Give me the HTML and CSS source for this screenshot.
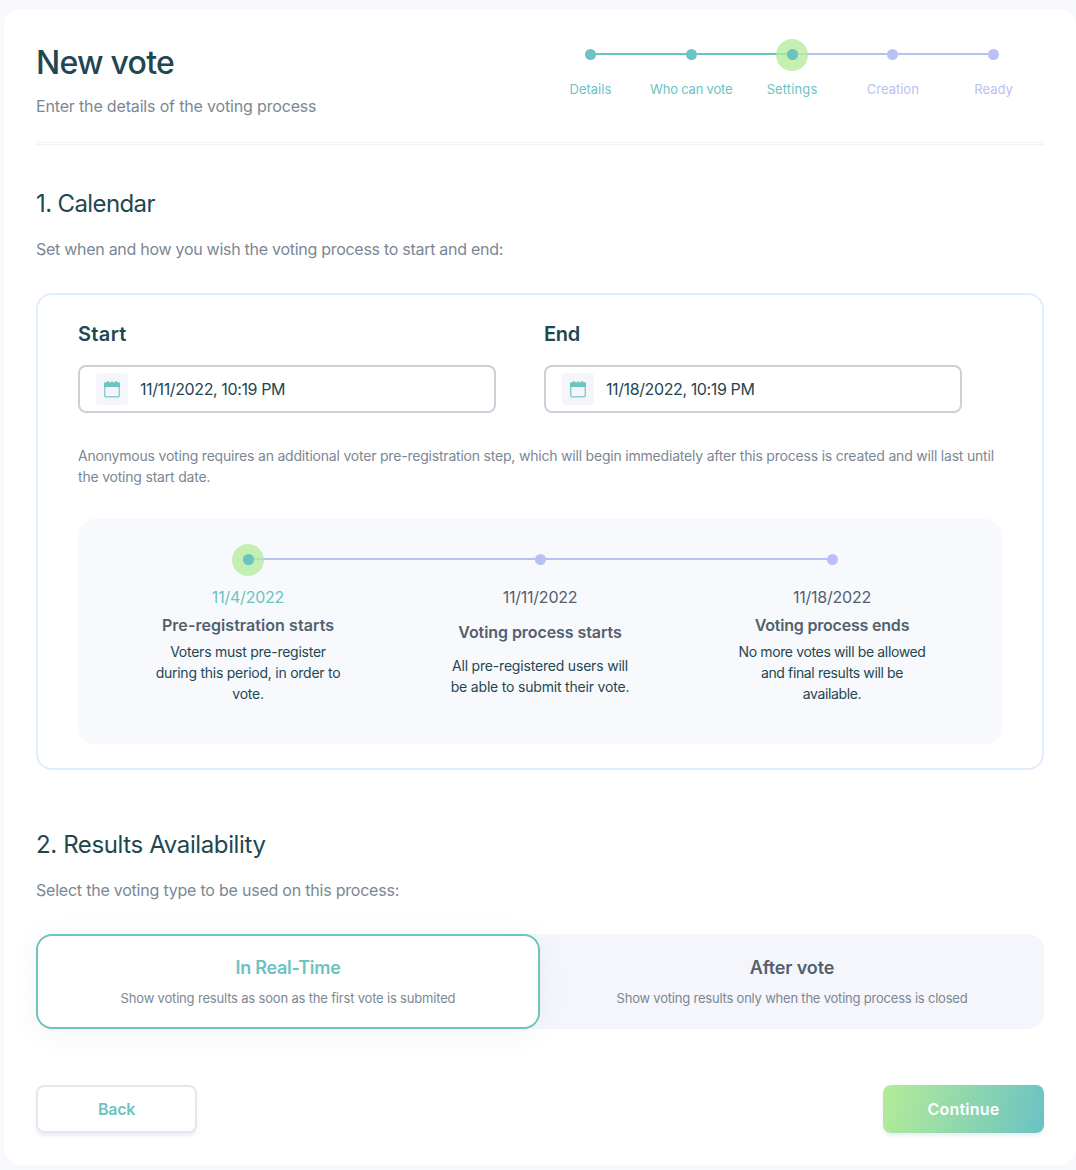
FILE: index.html
```
<!DOCTYPE html>
<html lang="en">
<head>
<meta charset="utf-8">
<title>New vote</title>
<link rel="stylesheet" href="styles.css">
</head>
<body>
<main class="panel">
  <header class="header">
    <div class="header-text">
      <h1 class="title">New vote</h1>
      <p class="subtitle">Enter the details of the voting process</p>
    </div>
    <ol class="steps">
      <li class="step done first"><div class="rail"><i class="line"></i><i class="dot"></i><i class="line"></i></div><span class="step-label">Details</span></li>
      <li class="step done"><div class="rail"><i class="line"></i><i class="dot"></i><i class="line"></i></div><span class="step-label tight">Who can vote</span></li>
      <li class="step current"><div class="rail"><i class="line"></i><i class="dot"></i><i class="line"></i></div><span class="step-label wide">Settings</span></li>
      <li class="step"><div class="rail"><i class="line"></i><i class="dot"></i><i class="line"></i></div><span class="step-label">Creation</span></li>
      <li class="step last"><div class="rail"><i class="line"></i><i class="dot"></i><i class="line"></i></div><span class="step-label">Ready</span></li>
    </ol>
  </header>
  <div class="divider"></div>

  <section class="section">
    <h2 class="heading heading-calendar">1. Calendar</h2>
    <p class="intro">Set when and how you wish the voting process to start and end:</p>
    <div class="card">
      <div class="dates">
        <div class="field">
          <label class="field-label">Start</label>
          <div class="input">
            <span class="input-icon"><svg width="16" height="17" viewBox="0 0 16 17" fill="#6bc3c2"><path d="M3 0h1.500v1.300h2.700V.6h1.600v.7h2.700V0H13v1.300h1.600Q16 1.300 16 2.700V6H0V2.700Q0 1.300 1.400 1.300H3z"/><path opacity=".75" d="M0 6h1.500v8.900h13V6H16v9q0 1.400-1.400 1.400H1.400Q0 16.400 0 15z"/></svg></span>
            <span class="input-value">11/11/2022, 10:19 PM</span>
          </div>
        </div>
        <div class="field">
          <label class="field-label label-end">End</label>
          <div class="input">
            <span class="input-icon"><svg width="16" height="17" viewBox="0 0 16 17" fill="#6bc3c2"><path d="M3 0h1.500v1.300h2.700V.6h1.600v.7h2.700V0H13v1.300h1.600Q16 1.300 16 2.700V6H0V2.700Q0 1.300 1.400 1.300H3z"/><path opacity=".75" d="M0 6h1.500v8.900h13V6H16v9q0 1.400-1.400 1.400H1.400Q0 16.400 0 15z"/></svg></span>
            <span class="input-value">11/18/2022, 10:19 PM</span>
          </div>
        </div>
      </div>
      <p class="note">Anonymous voting requires an additional voter pre-registration step, which will begin immediately after this process is created and will last until the voting start date.</p>
      <div class="timeline">
        <div class="step current first">
          <div class="rail"><i class="line"></i><i class="dot"></i><i class="line"></i></div>
          <div class="event">
            <span class="event-date">11/4/2022</span>
            <strong class="event-title wide">Pre-registration starts</strong>
            <p class="event-text">Voters must pre-register during this period, in order to vote.</p>
          </div>
        </div>
        <div class="step">
          <div class="rail"><i class="line"></i><i class="dot"></i><i class="line"></i></div>
          <div class="event">
            <span class="event-date">11/11/2022</span>
            <strong class="event-title">Voting process starts</strong>
            <p class="event-text relaxed">All pre-registered users will be able to submit their vote.</p>
          </div>
        </div>
        <div class="step last">
          <div class="rail"><i class="line"></i><i class="dot"></i><i class="line"></i></div>
          <div class="event">
            <span class="event-date">11/18/2022</span>
            <strong class="event-title tight">Voting process ends</strong>
            <p class="event-text tight">No more votes will be allowed and final results will be available.</p>
          </div>
        </div>
      </div>
    </div>
  </section>

  <section class="section results">
    <h2 class="heading">2. Results Availability</h2>
    <p class="intro relaxed">Select the voting type to be used on this process:</p>
    <div class="options">
      <div class="option selected">
        <strong class="option-title tight">In Real-Time</strong>
        <span class="option-text">Show voting results as soon as the first vote is submited</span>
      </div>
      <div class="option">
        <strong class="option-title">After vote</strong>
        <span class="option-text tight">Show voting results only when the voting process is closed</span>
      </div>
    </div>
  </section>

  <footer class="actions">
    <button class="button back">Back</button>
    <button class="button continue">Continue</button>
  </footer>
</main>
</body>
</html>
```
FILE: styles.css
```
* { box-sizing: border-box; }

body {
  margin: 0;
  padding: 9px 0 5px 4px;
  background: #f8f9fd;
  font-family: Inter, "Open Sans", sans-serif;
  color: #1f4751;
}

h1, h2, p, ol { margin: 0; padding: 0; }

.panel {
  height: 1156px;
  padding: 29px 32px 32px;
  background: #fff;
  border-radius: 16px;
}

/* Header and progress steps */
.header { display: flex; height: 104px; }
.header-text { width: 50%; padding-top: 5px; }
.title { font-size: 32px; font-weight: 500; line-height: 40px; letter-spacing: -0.75px; }
.subtitle { margin-top: 11px; font-size: 16px; line-height: 24px; letter-spacing: -0.165px; color: #7b8794; }

.steps { display: flex; width: 50%; padding-top: 11px; list-style: none; }
.step { flex: 1; display: flex; flex-direction: column; align-items: center; }
.rail { display: flex; align-self: stretch; height: 11px; }
.line { flex: 1; height: 2px; margin-top: 4px; background: #b9c1f2; }
.dot { position: relative; width: 11px; height: 11px; border-radius: 50%; background: #b9c1f2; }
.done .line, .done .dot, .current .dot, .current .line:first-child { background: #6bc3c2; }
.current .dot { isolation: isolate; }
.current .dot::before {
  content: "";
  position: absolute;
  inset: -10.500px;
  z-index: -1;
  border-radius: 50%;
  background: rgba(178, 235, 152, 0.75);
}
.current .dot::after {
  content: "";
  position: absolute;
  inset: 0;
  border-radius: 50%;
  background: #6bc3c2;
}
.first .line:first-child, .last .line:last-child { visibility: hidden; }
.step-label { margin-top: 19px; font-size: 13px; line-height: 20px; color: #b9c1f2; white-space: nowrap; }
.step-label.tight { letter-spacing: -0.2px; }
.step-label.wide { letter-spacing: 0.12px; }
.done .step-label, .current .step-label { color: #6bc3c2; }

.divider { height: 3px; border: 1px solid #eff3fc; }

/* Sections */
.section { padding-top: 43px; }
.heading { font-size: 24px; font-weight: 400; line-height: 32px; letter-spacing: -0.38px; }
.heading-calendar { letter-spacing: -0.62px; }
.intro { margin-top: 17px; font-size: 16px; line-height: 24px; letter-spacing: -0.28px; color: #7b8794; }
.intro.relaxed { letter-spacing: -0.22px; }

.card { height: 477px; margin-top: 32px; padding: 24px 40px; border: 2px solid #e0edfd; border-radius: 16px; }
.dates { display: grid; grid-template-columns: 418px 418px; gap: 48px; }
.field { display: flex; flex-direction: column; gap: 16px; }
.field-label { font-size: 20px; font-weight: 600; line-height: 30px; letter-spacing: 0.35px; }
.label-end { letter-spacing: -0.3px; }
.input { display: flex; align-items: center; gap: 12px; height: 48px; padding: 0 16px; border: 2px solid #cbd0d9; border-radius: 8px; }
.input-icon { display: flex; align-items: center; justify-content: center; width: 32px; height: 32px; border-radius: 4px; background: #f5f6fb; }
.input-value { font-size: 16px; letter-spacing: -0.39px; }
.note { margin: 32px 0; font-size: 14px; line-height: 21px; letter-spacing: -0.203px; color: #7b8794; }

.timeline { display: flex; height: 225px; padding: 35px 24px 0; border-radius: 16px; background: #f8f9fd; }
.event { display: grid; height: 119px; margin-top: 20px; row-gap: 4px; justify-items: center; align-items: start; text-align: center; }
.event-date { font-size: 16px; line-height: 24px; letter-spacing: -0.22px; color: #52606d; }
.current .event-date { color: #6bc3c2; }
.event-title { font-size: 16px; font-weight: 600; line-height: 24px; color: #52606d; letter-spacing: -0.07px; }
.event-title.wide { letter-spacing: 0.06px; }
.event-title.tight { letter-spacing: -0.2px; }
.event-text { max-width: 194px; margin-top: -0.5px; font-size: 14px; line-height: 21px; letter-spacing: -0.25px; }
.event-text.relaxed { letter-spacing: -0.19px; }
.event-text.tight { letter-spacing: -0.36px; }

.results { padding-top: 59px; }
.options { display: grid; grid-template-columns: 1fr 1fr; height: 95px; margin-top: 32px; border-radius: 16px; background: #f5f6fb; }
.option { display: flex; flex-direction: column; align-items: center; gap: 7px; padding-top: 18px; border: 2px solid transparent; border-radius: 16px; }
.option.selected { background: #fff; border-color: #6bc3c2; box-shadow: 0 4px 30px rgba(0, 0, 0, 0.05); }
.option-title { font-size: 18px; font-weight: 600; line-height: 27px; letter-spacing: -0.15px; color: #52606d; }
.option-title.tight { letter-spacing: -0.27px; }
.selected .option-title { color: #6bc3c2; }
.option-text { font-size: 13px; line-height: 20px; letter-spacing: -0.18px; color: #7b8794; }
.option-text.tight { letter-spacing: -0.21px; }

.actions { display: flex; justify-content: space-between; margin-top: 56px; }
.button { width: 161px; height: 48px; padding: 0; border: 0; border-radius: 8px; font: 600 16px/24px Inter, sans-serif; box-shadow: 0 3px 3px rgba(180, 193, 228, 0.25); }
.back { border: 2px solid #e4e7eb; background: #fff; color: #6bc3c2; letter-spacing: -0.25px; }
.continue { background: linear-gradient(104deg, #b3eb99 2%, #6bc3c2 98%); color: #fff; letter-spacing: 0.2px; }
```
